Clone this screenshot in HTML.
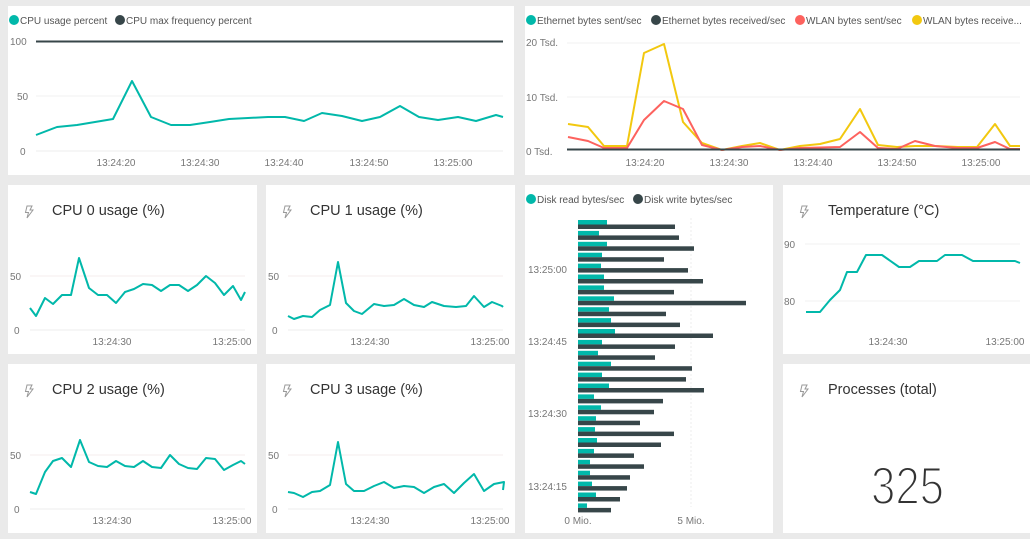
<!DOCTYPE html>
<html><head><meta charset="utf-8"><style>
html,body{margin:0;padding:0;background:#eaeaea;}
svg{display:block;font-family:"Liberation Sans",sans-serif;}
.ax{fill:#777;font-size:10px;}
.lg{fill:#555;font-size:10px;}
.tt{fill:#333;font-size:14.5px;}
.ic{fill:none;stroke:#999;stroke-width:1;}
.tl{fill:none;stroke:#01b8aa;stroke-width:2;stroke-linejoin:round;}
</style></head><body>
<svg width="1030" height="539" viewBox="0 0 1030 539">
<rect width="1030" height="539" fill="#eaeaea"/>
<rect x="8" y="6" width="506" height="169" fill="#fff"/>
<rect x="525" y="6" width="505" height="169" fill="#fff"/>
<rect x="8" y="185" width="249" height="169" fill="#fff"/>
<rect x="266" y="185" width="249" height="169" fill="#fff"/>
<rect x="8" y="364" width="249" height="169" fill="#fff"/>
<rect x="266" y="364" width="249" height="169" fill="#fff"/>
<rect x="525" y="185" width="248" height="348" fill="#fff"/>
<rect x="783" y="185" width="247" height="169" fill="#fff"/>
<rect x="783" y="364" width="247" height="169" fill="#fff"/>

<circle cx="14" cy="20" r="5" fill="#01b8aa"/><text class="lg" x="20" y="24">CPU usage percent</text>
<circle cx="120" cy="20" r="5" fill="#374649"/><text class="lg" x="126" y="24">CPU max frequency percent</text>
<text class="ax" x="10" y="45">100</text><text class="ax" x="17" y="100">50</text><text class="ax" x="20" y="155">0</text>
<line x1="36" y1="96" x2="503" y2="96" stroke="#f0f0f0"/>
<line x1="36" y1="151" x2="503" y2="151" stroke="#eee"/>
<line x1="36" y1="41.5" x2="503" y2="41.5" stroke="#374649" stroke-width="2"/>
<polyline class="tl" points="36,135 57,127 77,125 95,122 113,119 132,81 151,117 171,125 190,125 210,122 229,119 248,118 268,117 285,117 304,121 322,113 342,116 362,121 380,117 400,106 419,117 438,120 458,117 476,121 496,115 503,117"/>
<g class="ax" text-anchor="middle"><text x="116" y="166">13:24:20</text><text x="200" y="166">13:24:30</text><text x="284" y="166">13:24:40</text><text x="369" y="166">13:24:50</text><text x="453" y="166">13:25:00</text></g>

<circle cx="531" cy="20" r="5" fill="#01b8aa"/><text class="lg" x="537" y="24">Ethernet bytes sent/sec</text>
<circle cx="656" cy="20" r="5" fill="#374649"/><text class="lg" x="662" y="24">Ethernet bytes received/sec</text>
<circle cx="800" cy="20" r="5" fill="#fd625e"/><text class="lg" x="806" y="24">WLAN bytes sent/sec</text>
<circle cx="917" cy="20" r="5" fill="#f2c80f"/><text class="lg" x="923" y="24">WLAN bytes receive...</text>
<text class="ax" x="526" y="46">20 Tsd.</text><text class="ax" x="526" y="101">10 Tsd.</text><text class="ax" x="526" y="155">0 Tsd.</text>
<line x1="567" y1="43" x2="1020" y2="43" stroke="#f0f0f0"/>
<line x1="567" y1="97" x2="1020" y2="97" stroke="#f0f0f0"/>
<polyline fill="none" stroke="#f2c80f" stroke-width="2" stroke-linejoin="round" points="568,124 588,127 604,146 627,146 644,53 664,44 683,122 702,143 722,150 742,146 760,143 780,150 800,146 820,144 840,139 860,109 878,145 897,147 915,146 935,146 958,147 977,147 995,124 1010,146 1020,146"/>
<polyline fill="none" stroke="#fd625e" stroke-width="2" stroke-linejoin="round" points="568,137 588,141 604,148 627,148 644,120 664,101 683,109 702,145 722,150 742,147 760,146 780,150 800,148 840,147 860,132 878,148 897,149 915,141 935,146 958,148 977,148 995,142 1010,149 1020,149"/>
<line x1="567" y1="149.5" x2="1020" y2="149.5" stroke="#374649" stroke-width="2"/>
<g class="ax" text-anchor="middle"><text x="645" y="166">13:24:20</text><text x="729" y="166">13:24:30</text><text x="813" y="166">13:24:40</text><text x="897" y="166">13:24:50</text><text x="981" y="166">13:25:00</text></g>

<defs><path id="bolt" d="M3,0 L8,0 L6,4 L9,4 L3,12 L4.5,6.5 L1.5,6.5 Z"/></defs>

<use href="#bolt" class="ic" x="24" y="206"/>
<text class="tt" x="52" y="215">CPU 0 usage (%)</text>
<line x1="30" y1="276" x2="245" y2="276" stroke="#f5eeee"/><line x1="30" y1="330" x2="245" y2="330" stroke="#eee"/>
<text class="ax" x="10" y="280">50</text><text class="ax" x="14" y="334">0</text>
<polyline class="tl" points="30,308 36,316 45,298 53,304 62,295 71,295 79,258 89,288 98,295 107,295 116,303 125,292 134,289 143,284 152,285 161,291 170,285 179,285 188,291 197,285 206,276 215,283 224,295 233,286 241,300 245,292"/>
<g class="ax" text-anchor="middle"><text x="112" y="345">13:24:30</text><text x="232" y="345">13:25:00</text></g>

<use href="#bolt" class="ic" x="282" y="206"/>
<text class="tt" x="310" y="215">CPU 1 usage (%)</text>
<line x1="288" y1="276" x2="503" y2="276" stroke="#f5eeee"/><line x1="288" y1="330" x2="503" y2="330" stroke="#eee"/>
<text class="ax" x="268" y="280">50</text><text class="ax" x="272" y="334">0</text>
<polyline class="tl" points="288,316 294,319 303,316 312,317 320,310 330,305 338,262 346,303 354,311 362,314 374,304 384,306 394,305 404,299 414,305 424,307 432,302 444,306 456,307 466,306 474,296 484,307 492,302 502,306 503,307"/>
<g class="ax" text-anchor="middle"><text x="370" y="345">13:24:30</text><text x="490" y="345">13:25:00</text></g>

<use href="#bolt" class="ic" x="24" y="385"/>
<text class="tt" x="52" y="394">CPU 2 usage (%)</text>
<line x1="30" y1="455" x2="245" y2="455" stroke="#f5eeee"/><line x1="30" y1="509" x2="245" y2="509" stroke="#eee"/>
<text class="ax" x="10" y="459">50</text><text class="ax" x="14" y="513">0</text>
<polyline class="tl" points="30,492 36,494 45,472 53,461 62,458 71,467 80,440 89,462 98,466 107,467 116,461 125,466 134,467 143,461 152,467 161,468 170,455 179,464 188,468 197,469 206,458 215,459 224,470 233,465 241,461 245,464"/>
<g class="ax" text-anchor="middle"><text x="112" y="524">13:24:30</text><text x="232" y="524">13:25:00</text></g>

<use href="#bolt" class="ic" x="282" y="385"/>
<text class="tt" x="310" y="394">CPU 3 usage (%)</text>
<line x1="288" y1="455" x2="503" y2="455" stroke="#f5eeee"/><line x1="288" y1="509" x2="503" y2="509" stroke="#eee"/>
<text class="ax" x="268" y="459">50</text><text class="ax" x="272" y="513">0</text>
<polyline class="tl" points="288,492 294,493 303,497 312,492 320,491 330,485 338,442 346,484 354,491 364,491 374,486 384,482 394,488 404,486 414,487 424,493 434,487 444,484 454,493 464,483 474,474 484,491 494,484 504,482 503,490"/>
<g class="ax" text-anchor="middle"><text x="370" y="524">13:24:30</text><text x="490" y="524">13:25:00</text></g>

<use href="#bolt" class="ic" x="799" y="206"/>
<text class="tt" x="828" y="215">Temperature (°C)</text>
<line x1="805" y1="244" x2="1020" y2="244" stroke="#f0f0f0"/><line x1="805" y1="301" x2="1020" y2="301" stroke="#f0f0f0"/>
<text class="ax" x="784" y="248">90</text><text class="ax" x="784" y="305">80</text>
<polyline class="tl" points="806,312 820,312 830,300 840,290 847,272 857,272 866,255 882,255 899,267 910,267 919,261 937,261 945,255 962,255 973,261 1015,261 1020,263"/>
<g class="ax" text-anchor="middle"><text x="888" y="345">13:24:30</text><text x="1005" y="345">13:25:00</text></g>

<use href="#bolt" class="ic" x="799" y="385"/>
<text class="tt" x="828" y="394">Processes (total)</text>
<text x="871" y="504" font-size="53" fill="#333" stroke="#fff" stroke-width="2" textLength="73" lengthAdjust="spacingAndGlyphs">325</text>

<circle cx="531" cy="199" r="5" fill="#01b8aa"/><text class="lg" x="537" y="203">Disk read bytes/sec</text>
<circle cx="638" cy="199" r="5" fill="#374649"/><text class="lg" x="644" y="203">Disk write bytes/sec</text>
<line x1="691" y1="218" x2="691" y2="507" stroke="#eee" stroke-dasharray="2,2"/>
<g class="ax"><text x="528" y="273">13:25:00</text><text x="528" y="345">13:24:45</text><text x="528" y="417">13:24:30</text><text x="528" y="490">13:24:15</text></g>
<g class="ax" text-anchor="middle"><text x="578" y="524">0 Mio.</text><text x="691" y="524">5 Mio.</text></g>
<g>
<rect x="578" y="220" width="29" height="4.5" fill="#01b8aa"/><rect x="578" y="224.5" width="97" height="4.5" fill="#374649"/>
<rect x="578" y="230.9" width="21" height="4.5" fill="#01b8aa"/><rect x="578" y="235.4" width="101" height="4.5" fill="#374649"/>
<rect x="578" y="241.8" width="29" height="4.5" fill="#01b8aa"/><rect x="578" y="246.3" width="116" height="4.5" fill="#374649"/>
<rect x="578" y="252.7" width="24" height="4.5" fill="#01b8aa"/><rect x="578" y="257.2" width="86" height="4.5" fill="#374649"/>
<rect x="578" y="263.6" width="23" height="4.5" fill="#01b8aa"/><rect x="578" y="268.1" width="110" height="4.5" fill="#374649"/>
<rect x="578" y="274.5" width="26" height="4.5" fill="#01b8aa"/><rect x="578" y="279" width="125" height="4.5" fill="#374649"/>
<rect x="578" y="285.4" width="26" height="4.5" fill="#01b8aa"/><rect x="578" y="289.9" width="96" height="4.5" fill="#374649"/>
<rect x="578" y="296.3" width="36" height="4.5" fill="#01b8aa"/><rect x="578" y="300.8" width="168" height="4.5" fill="#374649"/>
<rect x="578" y="307.2" width="31" height="4.5" fill="#01b8aa"/><rect x="578" y="311.7" width="88" height="4.5" fill="#374649"/>
<rect x="578" y="318.1" width="33" height="4.5" fill="#01b8aa"/><rect x="578" y="322.6" width="102" height="4.5" fill="#374649"/>
<rect x="578" y="329" width="37" height="4.5" fill="#01b8aa"/><rect x="578" y="333.5" width="135" height="4.5" fill="#374649"/>
<rect x="578" y="339.9" width="24" height="4.5" fill="#01b8aa"/><rect x="578" y="344.4" width="97" height="4.5" fill="#374649"/>
<rect x="578" y="350.8" width="20" height="4.5" fill="#01b8aa"/><rect x="578" y="355.3" width="77" height="4.5" fill="#374649"/>
<rect x="578" y="361.7" width="33" height="4.5" fill="#01b8aa"/><rect x="578" y="366.2" width="114" height="4.5" fill="#374649"/>
<rect x="578" y="372.6" width="24" height="4.5" fill="#01b8aa"/><rect x="578" y="377.1" width="108" height="4.5" fill="#374649"/>
<rect x="578" y="383.5" width="31" height="4.5" fill="#01b8aa"/><rect x="578" y="388" width="126" height="4.5" fill="#374649"/>
<rect x="578" y="394.4" width="16" height="4.5" fill="#01b8aa"/><rect x="578" y="398.9" width="85" height="4.5" fill="#374649"/>
<rect x="578" y="405.3" width="23" height="4.5" fill="#01b8aa"/><rect x="578" y="409.8" width="76" height="4.5" fill="#374649"/>
<rect x="578" y="416.2" width="18" height="4.5" fill="#01b8aa"/><rect x="578" y="420.7" width="62" height="4.5" fill="#374649"/>
<rect x="578" y="427.1" width="17" height="4.5" fill="#01b8aa"/><rect x="578" y="431.6" width="96" height="4.5" fill="#374649"/>
<rect x="578" y="438" width="19" height="4.5" fill="#01b8aa"/><rect x="578" y="442.5" width="83" height="4.5" fill="#374649"/>
<rect x="578" y="448.9" width="16" height="4.5" fill="#01b8aa"/><rect x="578" y="453.4" width="56" height="4.5" fill="#374649"/>
<rect x="578" y="459.8" width="12" height="4.5" fill="#01b8aa"/><rect x="578" y="464.3" width="66" height="4.5" fill="#374649"/>
<rect x="578" y="470.7" width="12" height="4.5" fill="#01b8aa"/><rect x="578" y="475.2" width="52" height="4.5" fill="#374649"/>
<rect x="578" y="481.6" width="14" height="4.5" fill="#01b8aa"/><rect x="578" y="486.1" width="49" height="4.5" fill="#374649"/>
<rect x="578" y="492.5" width="18" height="4.5" fill="#01b8aa"/><rect x="578" y="497" width="42" height="4.5" fill="#374649"/>
<rect x="578" y="503.4" width="9" height="4.5" fill="#01b8aa"/><rect x="578" y="507.9" width="33" height="4.5" fill="#374649"/>
</g>
</svg>
</body></html>
